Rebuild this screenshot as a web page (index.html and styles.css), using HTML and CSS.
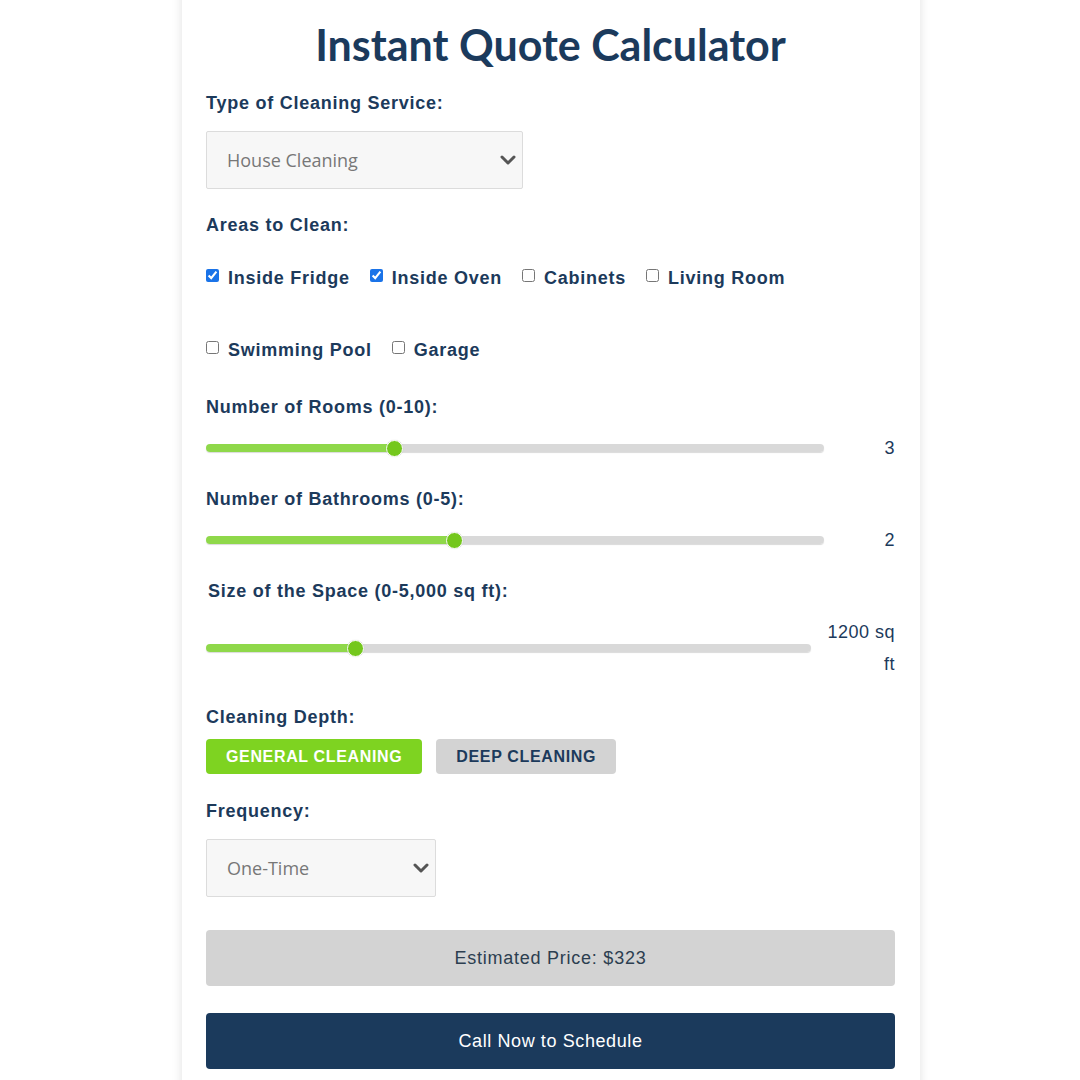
FILE: index.html
```html
<!DOCTYPE html>
<html lang="en">
<head>
<meta charset="utf-8">
<title>Instant Quote Calculator</title>
<link rel="stylesheet" href="styles.css">
</head>
<body>
<div class="card">
  <h1 class="title">Instant Quote Calculator</h1>

  <div class="field">
    <div class="label">Type of Cleaning Service:</div>
    <div class="select-wrap select-wrap--service">
      <select class="select"><option>House Cleaning</option></select>
      <svg class="chev" width="16" height="10" viewBox="0 0 16 10"><path d="M2 2l6 6 6-6" fill="none" stroke="#555" stroke-width="3" stroke-linecap="round" stroke-linejoin="round"/></svg>
    </div>
  </div>

  <div class="field field--checks">
    <div class="label">Areas to Clean:</div>
    <div class="checks">
      <label class="check"><input type="checkbox" checked> Inside Fridge</label>
      <label class="check"><input type="checkbox" checked> Inside Oven</label>
      <label class="check"><input type="checkbox"> Cabinets</label>
      <label class="check"><input type="checkbox"> Living Room</label>
      <label class="check"><input type="checkbox"> Swimming Pool</label>
      <label class="check"><input type="checkbox"> Garage</label>
    </div>
  </div>

  <div class="field field--slider">
    <div class="label">Number of Rooms (0-10):</div>
    <div class="slider-row">
      <input class="range" type="range" min="0" max="10" value="3" style="--v:0.3">
      <span class="value">3</span>
    </div>
  </div>

  <div class="field field--slider">
    <div class="label">Number of Bathrooms (0-5):</div>
    <div class="slider-row">
      <input class="range" type="range" min="0" max="5" value="2" style="--v:0.4">
      <span class="value">2</span>
    </div>
  </div>

  <div class="field field--slider field--last-slider">
    <div class="label label--size">Size of the Space (0-5,000 sq ft):</div>
    <div class="slider-row">
      <input class="range" type="range" min="0" max="5000" value="1200" style="--v:0.24">
      <span class="value value--wide">1200 sq ft</span>
    </div>
  </div>

  <div class="field field--depth">
    <div class="label label--tight">Cleaning Depth:</div>
    <div class="depth">
      <button class="depth-btn depth-btn--active">GENERAL CLEANING</button>
      <button class="depth-btn">DEEP CLEANING</button>
    </div>
  </div>

  <div class="field">
    <div class="label">Frequency:</div>
    <div class="select-wrap select-wrap--freq">
      <select class="select"><option>One-Time</option></select>
      <svg class="chev" width="16" height="10" viewBox="0 0 16 10"><path d="M2 2l6 6 6-6" fill="none" stroke="#555" stroke-width="3" stroke-linecap="round" stroke-linejoin="round"/></svg>
    </div>
  </div>

  <div class="price">Estimated Price: $323</div>
  <button class="cta">Call Now to Schedule</button>
</div>
</body>
</html>
```

FILE: styles.css
```css
* { box-sizing: border-box; }

html, body {
  margin: 0;
  padding: 0;
  background: #ffffff;
}

body {
  font-family: "Liberation Sans", Arial, sans-serif;
  color: #1c3a5b;
  letter-spacing: 0.75px;
}

.card {
  width: 738px;
  margin: -20px 0 0 182px;
  padding: 20px 25px 30px 24px;
  background: #fff;
  box-shadow: 0 0 10px rgba(0, 0, 0, 0.12);
  min-height: 1120px;
}

.title {
  margin: 17px 0 18px;
  font-family: Lato, "Liberation Sans", sans-serif;
  font-weight: 700;
  font-size: 43px;
  line-height: 56px;
  text-align: center;
  letter-spacing: 0;
  color: #1b3a5c;
}

.field {
  margin-bottom: 24px;
}

.field--checks { margin-bottom: 29px; }

.label {
  font-size: 18px;
  font-weight: 700;
  line-height: 24px;
  margin-bottom: 16px;
}

.label--size { padding-left: 2px; }
.label--tight { margin-bottom: 10px; }

.select-wrap {
  position: relative;
  height: 58px;
}
.select-wrap--service { width: 317px; }
.select-wrap--freq { width: 230px; }

.select {
  -webkit-appearance: none;
  appearance: none;
  width: 100%;
  height: 58px;
  padding: 0 20px;
  background: #f7f7f7;
  border: 1px solid #dcdcdc;
  border-radius: 2px;
  font-family: "Open Sans", sans-serif;
  font-size: 18px;
  color: #777;
  letter-spacing: 0;
}

.chev {
  position: absolute;
  right: 7px;
  top: 24px;
  pointer-events: none;
}

.checks {
  display: flex;
  flex-wrap: wrap;
  column-gap: 20px;
  row-gap: 40px;
  margin-top: 25px;
}

.check {
  display: flex;
  align-items: center;
  height: 32px;
  font-size: 18px;
  font-weight: 700;
}

.check input {
  width: 13px;
  height: 13px;
  margin: -6px 9px 0 0;
  accent-color: #1a73e8;
}

.field--slider .label { margin-bottom: 13px; }
.field--slider { margin-bottom: 23px; }
.field--last-slider { margin-bottom: 25px; }

.slider-row {
  display: flex;
  align-items: center;
  min-height: 32px;
}

.range {
  -webkit-appearance: none;
  appearance: none;
  flex: 1;
  min-width: 0;
  height: 8px;
  margin: 0;
  border-radius: 4px;
  background: linear-gradient(to right, #8fd84a calc(8px + (100% - 16px) * var(--v)), #d9d9d9 0);
  box-shadow: 0 1px 1px rgba(0, 0, 0, 0.15);
  outline: none;
}

.range::-webkit-slider-thumb {
  -webkit-appearance: none;
  appearance: none;
  width: 17px;
  height: 17px;
  border-radius: 50%;
  background: #74c71d;
  border: 1.5px solid #fff;
  box-shadow: 0 0 1px rgba(0, 0, 0, 0.2);
}

.value {
  width: 50px;
  margin-left: 21px;
  text-align: right;
  font-size: 18px;
  line-height: 32px;
  letter-spacing: 0.5px;
}

.value--wide {
  width: 70px;
  margin-left: 14px;
}

.field--depth { margin-bottom: 25px; }

.depth {
  display: flex;
  gap: 14px;
}

.depth-btn {
  height: 35px;
  padding: 0 20px;
  border: none;
  border-radius: 4px;
  background: #d3d3d3;
  color: #1c3a5b;
  font-family: "Liberation Sans", Arial, sans-serif;
  font-size: 16px;
  font-weight: 700;
  letter-spacing: 0.65px;
}

.depth-btn--active {
  background: #7ed321;
  color: #fff;
}

.price {
  margin-top: 33px;
  height: 56px;
  display: flex;
  align-items: center;
  justify-content: center;
  background: #d3d3d3;
  border-radius: 4px;
  font-size: 18px;
  color: #2c3e50;
}

.cta {
  display: block;
  width: 100%;
  height: 56px;
  margin-top: 27px;
  border: none;
  border-radius: 4px;
  background: #1b3a5c;
  color: #fff;
  font-family: "Liberation Sans", Arial, sans-serif;
  font-size: 18px;
  letter-spacing: 0.6px;
}
```
